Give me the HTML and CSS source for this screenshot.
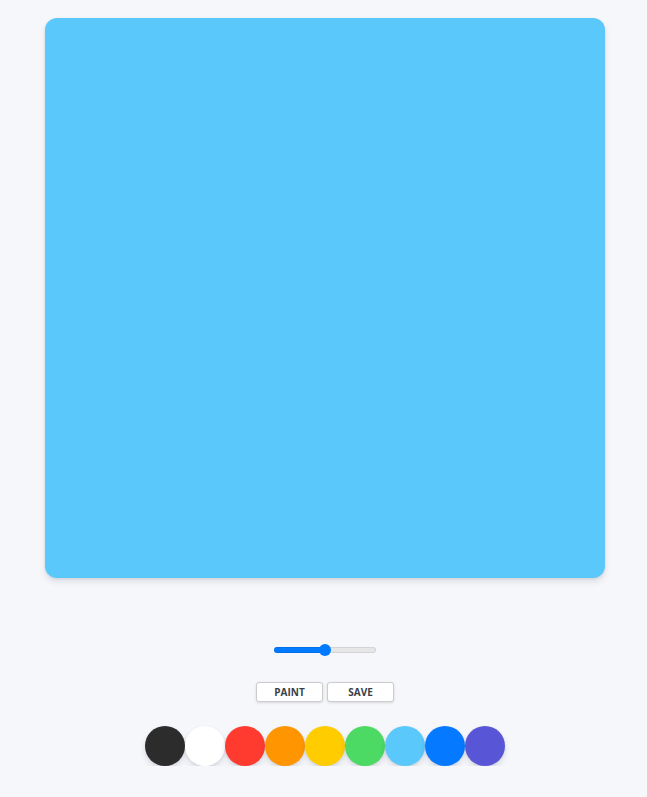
FILE: index.html
```html
<!DOCTYPE html>
<html>
<head>
<meta charset="utf-8">
<link rel="stylesheet" href="styles.css">
</head>
<body>
<main class="app">
  <div class="canvas"></div>
  <input class="size" type="range" min="0" max="100" value="50">
  <div class="buttons">
    <button class="btn">PAINT</button>
    <button class="btn">SAVE</button>
  </div>
  <div class="palette">
    <span class="swatch c-black"></span>
    <span class="swatch c-white"></span>
    <span class="swatch c-red"></span>
    <span class="swatch c-orange"></span>
    <span class="swatch c-yellow"></span>
    <span class="swatch c-green"></span>
    <span class="swatch c-sky"></span>
    <span class="swatch c-blue"></span>
    <span class="swatch c-purple"></span>
  </div>
</main>
</body>
</html>
```
FILE: styles.css
```css
html, body {
  margin: 0;
  padding: 0;
  background: #f5f7fa;
  font-family: "Open Sans", "Liberation Sans", sans-serif;
}
.app {
  display: flex;
  flex-direction: column;
  align-items: center;
  padding: 18px 0 0 3px;
}
.canvas {
  width: 560px;
  height: 560px;
  background: #5ac8fa;
  border-radius: 12px;
  box-shadow: 0 4px 6px rgba(50, 50, 93, 0.11), 0 1px 3px rgba(0, 0, 0, 0.08);
}
.size {
  -webkit-appearance: none;
  appearance: none;
  width: 102px;
  height: 12px;
  margin: 66px 0 0 0;
  padding: 0;
  background: transparent;
}
.size::-webkit-slider-runnable-track {
  height: 6px;
  border-radius: 3px;
  background: linear-gradient(to right, #007aff 50%, #e6e6e6 50%);
  box-shadow: inset 0 0 0 1px rgba(0,0,0,0.08);
}
.size::-webkit-slider-thumb {
  -webkit-appearance: none;
  width: 12px;
  height: 12px;
  border-radius: 50%;
  background: #007aff;
  margin-top: -3px;
  border: none;
}
.buttons {
  display: flex;
  gap: 4px;
  margin-top: 26px;
}
.btn {
  width: 67px;
  height: 20px;
  padding: 0;
  background: #fff;
  border: 1px solid #ccc;
  border-radius: 3px;
  box-shadow: 0 1px 3px rgba(0,0,0,0.12);
  font-family: "Open Sans", "Liberation Sans", sans-serif;
  font-weight: 700;
  font-size: 10px;
  color: #3a3f47;
}
.palette {
  display: flex;
  margin-top: 24px;
}
.swatch {
  width: 40px;
  height: 40px;
  border-radius: 50%;
  box-shadow: 0 4px 6px rgba(50, 50, 93, 0.11), 0 1px 3px rgba(0, 0, 0, 0.08);
}
.c-black { background: #2c2c2c; }
.c-white { background: #ffffff; }
.c-red { background: #ff3b30; }
.c-orange { background: #ff9500; }
.c-yellow { background: #ffcc00; }
.c-green { background: #4cd964; }
.c-sky { background: #5ac8fa; }
.c-blue { background: #0579ff; }
.c-purple { background: #5856d6; }
```
